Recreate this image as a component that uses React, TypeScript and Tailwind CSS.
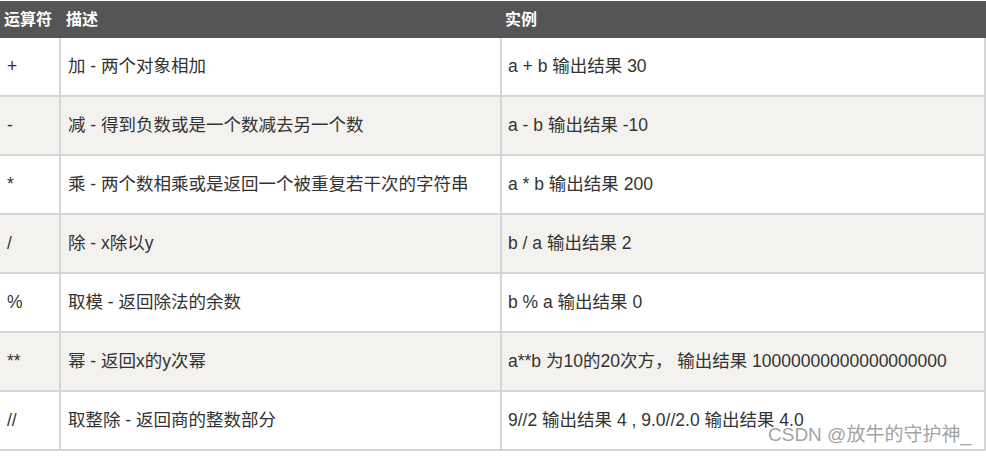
import React from "react";

const rows: [string, string, string][] = [
  ["+", "加 - 两个对象相加", "a + b 输出结果 30"],
  ["-", "减 - 得到负数或是一个数减去另一个数", "a - b 输出结果 -10"],
  ["*", "乘 - 两个数相乘或是返回一个被重复若干次的字符串", "a * b 输出结果 200"],
  ["/", "除 - x除以y", "b / a 输出结果 2"],
  ["%", "取模 - 返回除法的余数", "b % a 输出结果 0"],
  ["**", "幂 - 返回x的y次幂", "a**b 为10的20次方， 输出结果 10000000000000000000"],
  ["//", "取整除 - 返回商的整数部分", "9//2 输出结果 4 , 9.0//2.0 输出结果 4.0"],
];

export default function App() {
  return (
    <div
      className="relative w-[986px] h-[456px] bg-white overflow-hidden"
      style={{ fontFamily: '"Liberation Sans", "Noto Sans CJK SC", sans-serif' }}
    >
      <div className="mt-px flex h-[37px] bg-[#555555] text-white text-[16px] font-bold items-center">
        <div className="w-[61px] pl-[4px]">运算符</div>
        <div className="w-[441px] pl-[5px]">描述</div>
        <div className="w-[484px] pl-[3px]">实例</div>
      </div>
      {rows.map((r, i) => (
        <div
          key={i}
          className={
            i % 2 === 1
              ? "flex h-[59px] border-b-2 border-[#d6d6d6] bg-[#f3f2ee] text-[17.5px] text-[#333333]"
              : "flex h-[59px] border-b-2 border-[#d6d6d6] bg-white text-[17.5px] text-[#333333]"
          }
        >
          <div className="w-[61px] flex items-center pl-[7px] border-r-2 border-[#d6d6d6]">{r[0]}</div>
          <div className="w-[441px] flex items-center pl-[7px] border-r-2 border-[#d6d6d6] whitespace-nowrap">{r[1]}</div>
          <div className="w-[484px] flex items-center pl-[6px] border-r-2 border-[#d6d6d6] whitespace-nowrap">{r[2]}</div>
        </div>
      ))}
      <div className="absolute left-[768px] top-[425px] text-[19px] text-[#a3a3a3] whitespace-nowrap leading-none">
        CSDN @放牛的守护神_
      </div>
    </div>
  );
}
